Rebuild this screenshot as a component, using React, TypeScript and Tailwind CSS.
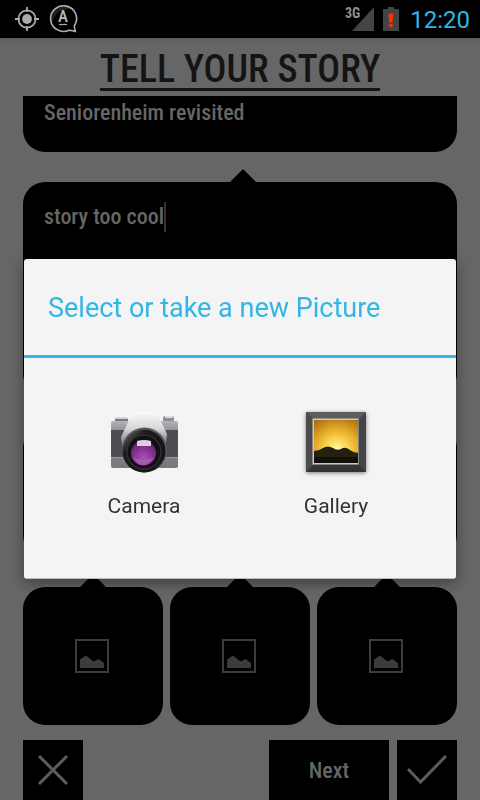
import { useId } from "react";

const condensed = "font-['Roboto_Condensed','Liberation_Sans_Narrow','Open_Sans_Condensed','DejaVu_Sans_Condensed',sans-serif]";
const roboto = "font-['Roboto','Noto_Sans',sans-serif]";

function StatusBar() {
  return (
    <header className={`${roboto} flex h-[38px] shrink-0 items-center bg-black pr-[10px] pl-[14px]`}>
      <svg width="26" height="26" viewBox="0 0 26 26" fill="none" stroke="#aaa" strokeWidth="1.8" aria-label="Location active">
        <circle cx="13" cy="13" r="8.6" />
        <circle cx="13" cy="13" r="4.9" fill="#aaa" stroke="none" />
        <path d="M13 1v5M13 20v5M1 13h5M20 13h5" />
      </svg>
      <svg className="ml-[9px]" width="30" height="30" viewBox="0 0 30 30" fill="none" aria-label="Story notification">
        <path d="M1.500 14A13 13 0 0 1 23 5C12 5 5 8 3 20Z" fill="#222" />
        <path
          d="M25.500 21.500A13 12.800 0 1 0 20 26.200C22.500 26.200 24.500 27 26.500 27.600C25.600 25.400 25.200 23.500 25.500 21.500Z"
          stroke="#b0b0b0"
          strokeWidth="1.600"
          strokeLinejoin="round"
        />
        <text x="14" y="18" textAnchor="middle" fill="#b8b8b8" fontSize="17" fontWeight="500" className={condensed}>
          A
        </text>
        <path d="M10 20.500h8" stroke="#aaa" strokeWidth="1.200" />
      </svg>
      <div className="ml-auto flex items-center">
        <span className={`${condensed} -mr-2 self-start pt-[6px] text-[14px] leading-[14px] font-bold text-[#919191]`}>3G</span>
        <svg width="22" height="24" viewBox="0 0 22 24" className="self-center" aria-label="Signal">
          <path d="M22 0v24H0Z" fill="#444" />
        </svg>
        <svg className="ml-[9px]" width="16" height="24" viewBox="0 0 16 24" aria-label="Battery low">
          <path d="M5 0h6v2h5v22H0V2h5Z" fill="#444" />
          <path d="M5.500 6.500h4.600l-.6 9h-3.400Z" fill="#ff3300" />
          <rect x="5.800" y="17" width="4" height="3" rx="1" fill="#ff3300" />
        </svg>
        <time className="ml-[11px] pt-[2px] text-[24px] leading-[36px] text-[#33b5e5]">12:20</time>
      </div>
    </header>
  );
}

function Notch() {
  return (
    <svg className="absolute -top-[13px] left-1/2 -ml-[11px]" width="28" height="14" viewBox="0 0 28 14" aria-hidden="true">
      <path d="M0 14L14 0L28 14Z" />
    </svg>
  );
}

function PictureTile({ label }: { label: string }) {
  return (
    <button type="button" aria-label={label} className="relative flex h-[138px] flex-1 items-center justify-center rounded-[22px] bg-black pr-[2px]">
      <svg className="absolute -top-[13px] left-1/2 -ml-[14px]" width="28" height="14" viewBox="0 0 28 14" aria-hidden="true">
        <path d="M0 14L14 0L28 14Z" />
      </svg>
      <svg width="34" height="34" viewBox="0 0 34 34" aria-hidden="true">
        <rect x="1" y="1" width="32" height="32" fill="none" stroke="#3c3c3c" strokeWidth="2" />
        <path d="M5 29V20.500L11 16.500L18.500 22.500L23.500 20L29 24V29Z" fill="#3c3c3c" />
      </svg>
    </button>
  );
}

function CameraIcon() {
  const id = useId();
  return (
    <svg width="72" height="72" viewBox="0 0 72 72" aria-hidden="true">
      <defs>
        <linearGradient id={`${id}b`} x1="0" y1="0" x2="0" y2="1">
          <stop offset="0" stopColor="#b2b3b5" />
          <stop offset=".25" stopColor="#8b8c8e" />
          <stop offset="1" stopColor="#77787c" />
        </linearGradient>
        <linearGradient id={`${id}p`} x1="0" y1="0" x2="0" y2="1">
          <stop offset="0" stopColor="#fafafa" />
          <stop offset=".35" stopColor="#d5d6d8" />
          <stop offset=".6" stopColor="#8c8d90" />
          <stop offset="1" stopColor="#6c6d70" />
        </linearGradient>
        <radialGradient id={`${id}l`} cx=".5" cy=".7" r=".7">
          <stop offset="0" stopColor="#a554ae" />
          <stop offset=".6" stopColor="#843091" />
          <stop offset="1" stopColor="#5b1c66" />
        </radialGradient>
        <linearGradient id={`${id}r`} x1="0" y1="0" x2="1" y2="1">
          <stop offset="0" stopColor="#777" />
          <stop offset=".3" stopColor="#1a1a1a" />
          <stop offset=".8" stopColor="#161616" />
          <stop offset="1" stopColor="#474080" />
        </linearGradient>
      </defs>
      <rect x="7" y="8" width="13" height="5" rx="1.500" fill="#77797c" />
      <rect x="8" y="7" width="11" height="2" rx="1" fill="#d5d6d8" />
      <rect x="55" y="6" width="11" height="6" rx="2" fill="#8d8f92" />
      <rect x="57" y="6" width="8" height="2" rx="1" fill="#dedfe0" />
      <rect x="3" y="11" width="67" height="47" rx="2" fill={`url(#${id}b)`} />
      <path d="M3 20h67v27H3Z" fill="#4d4e54" />
      <path d="M3 47h67v1H3Z" fill="#9a9aa0" />
      <path d="M24 4Q27 2 31 2H43Q48 2 50 5L59 24L56 50H16L13 27Z" fill={`url(#${id}p)`} />
      <circle cx="36.500" cy="40" r="22.500" fill="#5b5b60" />
      <circle cx="36" cy="41" r="21.500" fill={`url(#${id}r)`} />
      <circle cx="36" cy="42" r="17" fill="#111" stroke="#3c3c3c" />
      <circle cx="35.500" cy="43" r="12.500" fill={`url(#${id}l)`} />
      <path d="M29 31q7-2 14 0v5H29Z" fill="#ddcfe0" />
      <path d="M25 47q10 6 21 0q-4 8-11 8t-10-8Z" fill="#c583cb" opacity=".35" />
    </svg>
  );
}

function GalleryIcon() {
  const id = useId();
  return (
    <svg width="72" height="72" viewBox="0 0 72 72" className="drop-shadow-[0_1px_2px_rgba(0,0,0,0.5)]" aria-hidden="true">
      <defs>
        <radialGradient id={`${id}s`} cx=".52" cy=".7" r=".85">
          <stop offset="0" stopColor="#fffbd5" />
          <stop offset=".2" stopColor="#ffe566" />
          <stop offset=".55" stopColor="#e9b02a" />
          <stop offset="1" stopColor="#a96810" />
        </radialGradient>
      </defs>
      <rect x="6" y="2" width="60" height="60" rx="1" fill="#444546" />
      <path d="M6 2h60l-7 7H13Z" fill="#5b5c5d" />
      <path d="M6 62h60l-7-7H13Z" fill="#343434" />
      <path d="M6 2l7 7v46l-7 7Z" fill="#4b4b4c" />
      <rect x="12.500" y="8.500" width="46" height="46" fill="#c8c8c8" />
      <rect x="14" y="10" width="44" height="43" fill={`url(#${id}s)`} />
      <path d="M14 41Q19 41 23 38Q28 35 33 38Q37 41 41 39Q45 36 50 40Q54 43 58 43V53H14Z" fill="#25210f" />
      <path d="M14 47h44v6H14Z" fill="#11110a" />
    </svg>
  );
}

function PictureDialog() {
  const choices = [
    { name: "Camera", icon: <CameraIcon /> },
    { name: "Gallery", icon: <GalleryIcon /> },
  ];
  return (
    <div className="fixed inset-x-0 top-[38px] bottom-0 flex items-center px-6">
      <section
        role="dialog"
        aria-labelledby="picture-title"
        className={`${roboto} w-full rounded-[3px] border-b border-[#bbb] bg-[#f4f4f4] shadow-[0_4px_14px_rgba(0,0,0,0.4)]`}
      >
        <h2 id="picture-title" className="border-b-[3px] border-[#33b5e5] px-6 pt-[2px] text-[27px] leading-[94px] text-[#33b5e5]">
          Select or take a new Picture
        </h2>
        <div className="grid grid-cols-2 px-6 pt-[52px] pb-[57px]">
          {choices.map((c) => (
            <button key={c.name} type="button" className="flex flex-col items-center gap-[9px] text-[21px] leading-[30px] text-[#333]">
              {c.icon}
              {c.name}
            </button>
          ))}
        </div>
      </section>
    </div>
  );
}

export default function App() {
  return (
    <div className={`${condensed} flex h-screen flex-col overflow-hidden bg-[#666]`}>
      <StatusBar />
      <div className="flex h-[58px] shrink-0 justify-center bg-linear-to-b from-[#5c5c5c] to-[#666] to-10%">
        <h1 className="mt-[6px] h-[47px] border-b-[3px] border-[#141414] text-[38px] leading-[50px] font-medium text-[#141414]">TELL YOUR STORY</h1>
      </div>
      <main className="flex flex-1 flex-col gap-[30px] px-[23px]">
        <div className="h-[56px] shrink-0 rounded-b-[22px] bg-black px-[21px]">
          <input aria-label="Story title" defaultValue="Seniorenheim revisited" className="w-full text-[22px] leading-[34px] font-medium text-[#666] outline-none" />
        </div>
        <div className="relative h-[214px] shrink-0 rounded-[22px] bg-black px-[21px] pt-5">
          <Notch />
          <div className="flex items-center">
            <input aria-label="Story text" defaultValue="story too cool" className="field-sizing-content text-[22px] leading-[30px] font-medium text-[#666] outline-none" />
            <span className="h-[30px] w-[2px] bg-[#333]" />
          </div>
        </div>
        <div className="h-[131px] shrink-0 rounded-[22px] bg-black" />
        <div className="flex shrink-0 gap-[7px]">
          <PictureTile label="Add first picture" />
          <PictureTile label="Add second picture" />
          <PictureTile label="Add third picture" />
        </div>
      </main>
      <footer className="flex h-[60px] shrink-0 gap-2 px-[23px]">
        <button type="button" aria-label="Cancel" className="mr-auto flex w-[60px] items-center justify-center bg-black">
          <svg width="32" height="32" viewBox="0 0 32 32" stroke="#5c5c5c" strokeWidth="3" aria-hidden="true">
            <path d="M2 2L30 30M30 2L2 30" />
          </svg>
        </button>
        <button type="button" className="w-[120px] bg-black text-[22px] font-medium text-[#666]">
          Next
        </button>
        <button type="button" aria-label="Confirm" className="flex w-[60px] items-center justify-center bg-black">
          <svg width="40" height="32" viewBox="0 0 40 32" fill="none" stroke="#5c5c5c" strokeWidth="3" aria-hidden="true">
            <path d="M1 15L13.500 28L39 2" />
          </svg>
        </button>
      </footer>
      <PictureDialog />
    </div>
  );
}
